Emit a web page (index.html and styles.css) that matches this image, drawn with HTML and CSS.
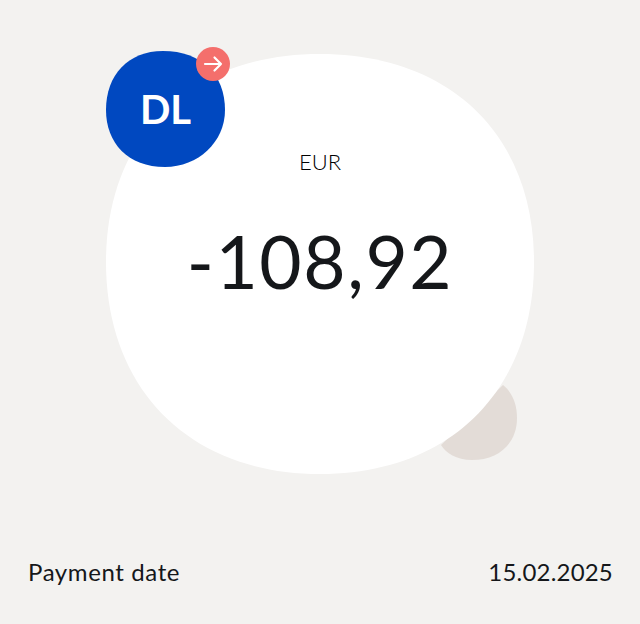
FILE: index.html
```html
<!DOCTYPE html>
<html lang="en">
<head>
<meta charset="utf-8">
<title>Payment</title>
<link rel="stylesheet" href="styles.css">
</head>
<body>
<main class="page">
  <section class="hero">
    <svg class="blobs" viewBox="0 0 640 500" width="640" height="500" aria-hidden="true">
      <path class="blob-tan" d="M503 385 C513 393 517 405 517 418 C517 444 498 460 472 460 C456 460 446 453 441 445 Z"/>
      <path class="blob-white" d="M320 54 C450 54 534 135 534 262 C534 390 450 474 320 474 C190 474 106 390 106 262 C106 135 190 54 320 54 Z"/>
      <path class="blob-blue" d="M163 51 C202 51 225 75 225 110 C225 142 198 167 165 167 C128 167 106 143 106 110 C106 75 128 51 163 51 Z"/>
    </svg>
    <div class="avatar">DL</div>
    <div class="badge">
      <svg viewBox="0 0 34 34" width="34" height="34" aria-hidden="true">
        <path class="arrow" d="M9 17 H25 M18.500 10.500 L25 17 L18.500 23.500"/>
      </svg>
    </div>
    <div class="amount-box">
      <div class="currency">EUR</div>
      <div class="amount">-108,92</div>
    </div>
  </section>
  <section class="row">
    <span class="label">Payment date</span>
    <span class="value">15.02.2025</span>
  </section>
</main>
</body>
</html>
```
FILE: styles.css
```css
* { box-sizing: border-box; margin: 0; padding: 0; }
html, body { width: 640px; height: 624px; overflow: hidden; background: #f3f2f0; }
body { font-family: Lato, "Open Sans", sans-serif; color: #15171a; }
.page { display: flex; flex-direction: column; width: 640px; height: 624px; }
.hero { position: relative; height: 500px; padding-top: 148px; }
.blobs { position: absolute; left: 0; top: 0; }
.blob-white { fill: #ffffff; }
.blob-tan { fill: #e3dcd7; }
.blob-blue { fill: #0048c0; }
.avatar { position: absolute; left: 106px; top: 51px; width: 119px; height: 116px; display: flex; align-items: center; justify-content: center; color: #fff; font-size: 40px; font-weight: 700; }
.badge { position: absolute; left: 196px; top: 47px; width: 34px; height: 34px; border-radius: 50%; background: #f46f6c; }
.badge svg { display: block; }
.arrow { fill: none; stroke: #fff; stroke-width: 2.2; stroke-linecap: round; stroke-linejoin: round; }
.amount-box { position: relative; display: flex; flex-direction: column; align-items: center; gap: 40px; }
.currency { font-size: 22px; line-height: 28px; font-weight: 300; color: #000; }
.amount { font-size: 73px; line-height: 90px; font-weight: 400; letter-spacing: 1.6px; }
.row { display: flex; justify-content: space-between; align-items: center; padding: 56px 27px 0 28px; font-size: 24px; line-height: 32px; }
.label { font-weight: 400; letter-spacing: 0.6px; }
.value { font-weight: 400; letter-spacing: 0.2px; }
```
